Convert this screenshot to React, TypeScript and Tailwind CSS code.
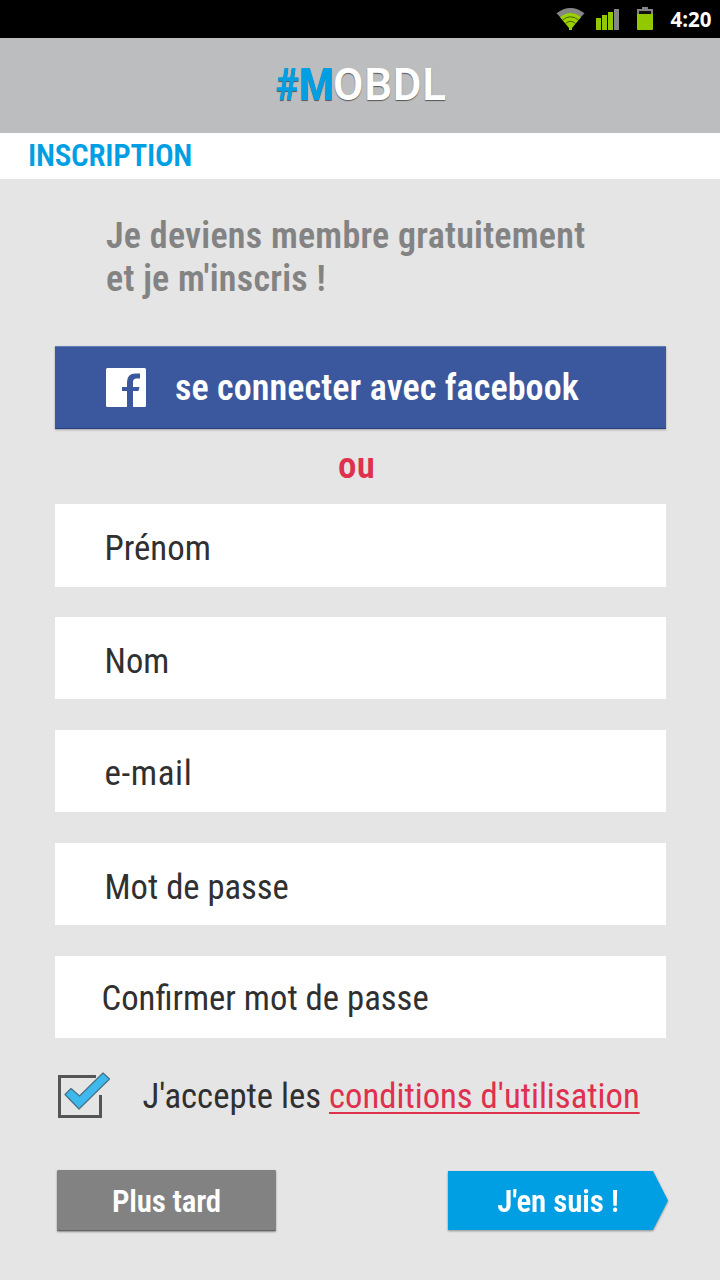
import React from "react";

const condensed = "font-['Roboto_Condensed','Roboto',sans-serif] [font-stretch:75%] whitespace-nowrap";

function StatusBar() {
  return (
    <div className="flex h-[38px] items-start bg-black pl-[556px]">
      <svg width="30" height="24" viewBox="0 0 30 24" className="mt-[7px] shrink-0">
        <path d="M0.5 6.2 Q14.5 -4.2 28.5 6.2 L24.5 10.5 Q14.5 2.5 4.5 10.5 Z" fill="#858585" />
        <path d="M4 10.2 Q14.5 2 25 10.2 L16 21 V23 H13 V21 Z" fill="#9bd000" />
        <path d="M6.5 13 Q14.5 6.5 22.5 13 M9.5 16.5 Q14.5 12.2 19.5 16.5" fill="none" stroke="#3c5200" strokeWidth="0.9" />
      </svg>
      <svg width="24" height="22" viewBox="0 0 24 22" className="ml-[10px] mt-[8px] shrink-0">
        <path d="M0 10h5v12H0zM6 7h5v15H6zM12 4h5v18h-5z" fill="#92c800" />
        <path d="M18 1h5v21h-5z" fill="#858585" />
      </svg>
      <svg width="17" height="24" viewBox="0 0 17 24" className="ml-[17px] mt-[7px] shrink-0">
        <path d="M5 0h6v2h5v5H0V2h5z" fill="#858585" />
        <path d="M2 4h12v3H2z" fill="#111" />
        <path d="M0 7h16v15q0 1-1 1H1q-1 0-1-1z" fill="#92c800" />
      </svg>
      <span className="ml-[16.5px] mt-[5px] font-['Open_Sans','Noto_Sans',sans-serif] text-[20.5px] font-bold leading-[28px] text-white">4:20</span>
    </div>
  );
}

function Field({ label, className }: { label: string; className: string }) {
  return (
    <div className="bg-white">
      <span className={`${condensed} ${className} block leading-[40px] text-[#303030]`}>{label}</span>
    </div>
  );
}

export default function App() {
  return (
    <div className="h-[1280px] w-[720px] overflow-hidden bg-[#e5e5e5]">
      <StatusBar />
      <header className="flex h-[95px] bg-[#bcbdbf] pl-[276px] pt-[22px]">
        <h1 className="flex font-['Roboto',sans-serif] text-[44px] font-semibold leading-[50px] text-white [text-shadow:0_1px_1px_rgba(0,0,0,0.55)]">
          <span className="w-[57px]"><span className="inline-block origin-left scale-x-[0.9] font-extrabold text-[#009fe4]">#M</span></span>
          <span className="tracking-[0.8px]">OBDL</span>
        </h1>
      </header>
      <div className="h-[46px] bg-white pl-[28px] pt-[5px]">
        <h2 className={`${condensed} text-[31px] font-semibold leading-[36px] tracking-[-0.25px] text-[#009fe4]`}>INSCRIPTION</h2>
      </div>
      <main className="pl-[55px] pr-[54px]">
        <p className={`${condensed} h-[167px] pl-[51px] pt-[36px] text-[36px] font-semibold leading-[43px] tracking-[0.25px] text-[#838383]`}>
          Je deviens membre gratuitement<br />et je m'inscris !
        </p>
        <button className="flex h-[83px] w-full items-center border-b border-t border-b-[#28427f] border-t-[#607bb5] bg-[#3b589e] pl-[51px] shadow-[0_1px_2px_rgba(0,0,0,0.3)]">
          <svg width="40" height="39" viewBox="0 0 40 39" className="shrink-0">
            <rect width="40" height="39" rx="1.5" fill="#fff" />
            <path d="M21 39V23h-5v-4h5V14q0-8.5 8.5-8.5H34v5h-3.5q-3.5 0-3.5 3.5v5h6.5l-1 4H27V39z" fill="#3b589e" />
          </svg>
          <span className={`${condensed} ml-[29px] text-[36px] font-semibold leading-[40px] tracking-[0.1px] text-white`}>se connecter avec facebook</span>
        </button>
        <div className={`${condensed} h-[75px] pl-[283px] pt-[17px] text-[37px] font-semibold leading-[40px] tracking-[0.3px] text-[#df304d]`}>ou</div>
        <div className="flex flex-col">
          <Field label="Prénom" className="h-[83px] pl-[49.5px] pt-[24px] text-[34.8px]" />
          <div className="h-[30px]" />
          <Field label="Nom" className="h-[82px] pl-[49.5px] pt-[24px] text-[34.5px]" />
          <div className="h-[31px]" />
          <Field label="e-mail" className="h-[82px] pl-[49.5px] pt-[24px] text-[35px] tracking-[0.6px]" />
          <div className="h-[31px]" />
          <Field label="Mot de passe" className="h-[82px] pl-[49.5px] pt-[24px] text-[34.6px]" />
          <div className="h-[31px]" />
          <Field label="Confirmer mot de passe" className="h-[82px] pl-[46.5px] pt-[22px] text-[34.7px]" />
        </div>
        <label className="mt-[33px] flex h-[50px] items-start pl-[2px]">
          <svg width="56" height="50" viewBox="0 0 56 50" className="shrink-0">
            <path d="M39 5.5H2.5v40H43.5V24" fill="none" stroke="#555" strokeWidth="3" />
            <path d="M8 23.5l6-6 8.5 7.5L46 2l6.5 6L22 38z" fill="#3db9ed" stroke="#477084" strokeWidth="1.2" strokeLinejoin="round" />
          </svg>
          <span className={`${condensed} ml-[29.5px] mt-[5px] text-[34.7px] leading-[40px] text-[#303030]`}>
            J'accepte les <span className="text-[#df304d] underline decoration-2 underline-offset-[4px] [text-decoration-skip-ink:none]">conditions d'utilisation</span>
          </span>
        </label>
        <div className="mt-[50px] flex items-start justify-between pl-[2px]">
          <button className="-mt-px h-[61px] w-[219px] rounded-[1px] border-b border-[#666] bg-[#828282] pt-[3px] shadow-[0_1px_2px_rgba(0,0,0,0.4)]">
            <span className={`${condensed} text-[31px] font-semibold leading-[40px] tracking-[-0.2px] text-white`}>Plus tard</span>
          </button>
          <button className="-mr-[2px] h-[59px] w-[220px] drop-shadow-[0_1px_1px_rgba(0,0,0,0.4)]">
            <span className={`${condensed} block h-[59px] bg-[#009fe4] text-[31px] font-semibold leading-[61px] tracking-[-0.1px] text-white [clip-path:polygon(0_0,205px_0,100%_50%,205px_100%,0_100%)]`}>J'en suis !</span>
          </button>
        </div>
      </main>
    </div>
  );
}
